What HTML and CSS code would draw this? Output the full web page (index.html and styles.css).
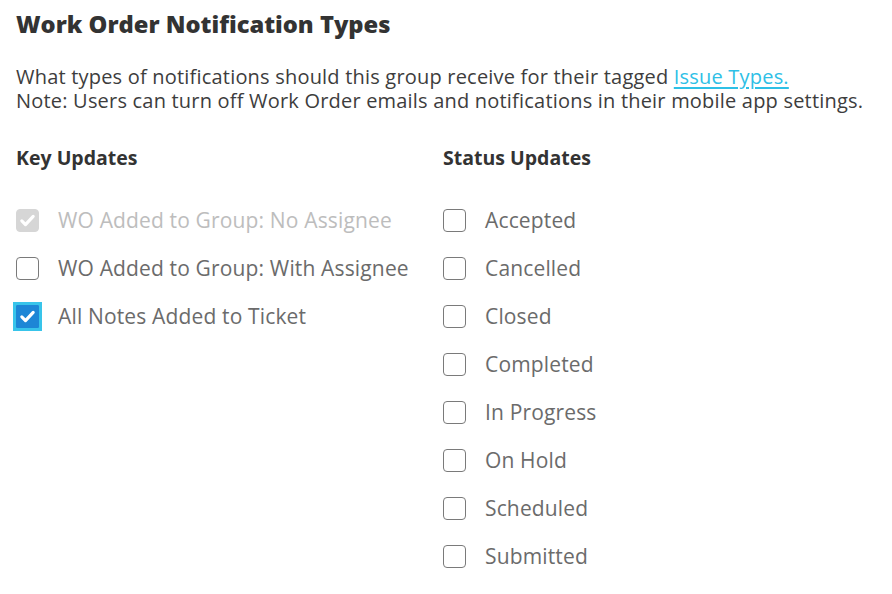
FILE: index.html
```html
<!DOCTYPE html>
<html>
<head>
<meta charset="utf-8">
<link rel="stylesheet" href="styles.css">
</head>
<body>
<div class="page">
  <h1 class="title">Work Order Notification Types</h1>
  <p class="intro"><span class="line">What types of notifications should this group receive for their tagged <a href="#" class="link">Issue Types.</a></span><span class="line">Note: Users can turn off Work Order emails and notifications in their mobile app settings.</span></p>
  <div class="columns">
    <div class="col col-key">
      <h2 class="col-title">Key Updates</h2>
      <ul class="list">
        <li class="item disabled"><span class="box checked-disabled"><svg viewBox="0 0 24 24" class="tick"><path d="M5.5 12.5l4.2 4.2 8.8-9.4" /></svg></span><span class="label">WO Added to Group: No Assignee</span></li>
        <li class="item"><span class="box"></span><span class="label">WO Added to Group: With Assignee</span></li>
        <li class="item"><span class="focus"><span class="box checked"><svg viewBox="0 0 24 24" class="tick"><path d="M5.5 12.5l4.2 4.2 8.8-9.4" /></svg></span></span><span class="label">All Notes Added to Ticket</span></li>
      </ul>
    </div>
    <div class="col col-status">
      <h2 class="col-title">Status Updates</h2>
      <ul class="list">
        <li class="item"><span class="box"></span><span class="label">Accepted</span></li>
        <li class="item"><span class="box"></span><span class="label">Cancelled</span></li>
        <li class="item"><span class="box"></span><span class="label">Closed</span></li>
        <li class="item"><span class="box"></span><span class="label">Completed</span></li>
        <li class="item"><span class="box"></span><span class="label">In Progress</span></li>
        <li class="item"><span class="box"></span><span class="label">On Hold</span></li>
        <li class="item"><span class="box"></span><span class="label">Scheduled</span></li>
        <li class="item"><span class="box"></span><span class="label">Submitted</span></li>
      </ul>
    </div>
  </div>
</div>
</body>
</html>
```
FILE: styles.css
```css
html, body {
  margin: 0;
  padding: 0;
  background: #ffffff;
}
body {
  font-family: "Open Sans", "Noto Sans", sans-serif;
  color: #3a3a3a;
}
.page {
  padding: 8px 16px 0 16px;
}
.title {
  margin: 0;
  font-size: 23.7px;
  font-weight: 800;
  line-height: 32px;
  color: #333333;
}
.intro {
  margin: 25px 0 0 0;
  font-size: 20px;
  letter-spacing: 0.2px;
  line-height: 24px;
  color: #3d3d3d;
}
.line {
  display: block;
  height: 24px;
  white-space: nowrap;
}
.link {
  color: #2ec0e6;
  text-decoration: underline;
  text-underline-offset: 3px;
}
.columns {
  display: flex;
  margin-top: 32px;
}
.col-key {
  width: 427px;
}
.col-title {
  margin: 0;
  font-size: 19.5px;
  font-weight: 700;
  line-height: 26px;
  color: #333333;
}
.list {
  list-style: none;
  margin: 37px 0 0 0;
  padding: 0;
  display: flex;
  flex-direction: column;
  gap: 24px;
}
.item {
  display: flex;
  align-items: center;
  height: 24px;
}
.box {
  box-sizing: border-box;
  width: 23px;
  height: 23px;
  border: 1.5px solid #7a7a7a;
  border-radius: 4px;
  display: flex;
  align-items: center;
  justify-content: center;
  flex: none;
  background: #fff;
}
.focus {
  display: flex;
  margin: -3px;
  padding: 2px;
  border: 1px solid #38c4ea;
  background: #38c4ea;
  flex: none;
}
.box.checked {
  background: #1d86d6;
  border-color: #1d86d6;
  border-radius: 1px;
}
.box.checked-disabled {
  background: #d6d6d6;
  border-color: #d6d6d6;
}
.tick {
  width: 21px;
  height: 21px;
  fill: none;
  stroke: #ffffff;
  stroke-width: 3.6;
  stroke-linecap: round;
  stroke-linejoin: round;
}
.label {
  margin-left: 19px;
  font-size: 21px;
  letter-spacing: 0.15px;
  color: #6b6b6b;
  white-space: nowrap;
}
.disabled .label {
  color: #bdbdbd;
}
```
